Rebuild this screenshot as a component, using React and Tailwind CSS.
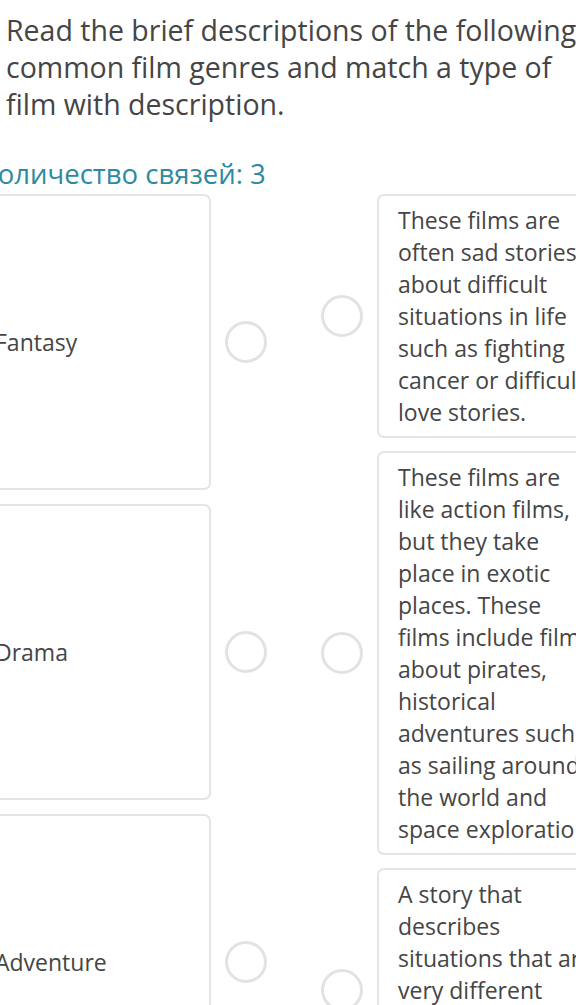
import React from "react";

const font = { fontFamily: '"Open Sans", "Noto Sans", sans-serif' };

const genres = ["Fantasy", "Drama", "Adventure"];

const descriptions = [
  [
    "These films are",
    "often sad stories",
    "about difficult",
    "situations in life",
    "such as fighting",
    "cancer or difficult",
    "love stories.",
  ],
  [
    "These films are",
    "like action films,",
    "but they take",
    "place in exotic",
    "places. These",
    "films include films",
    "about pirates,",
    "historical",
    "adventures such",
    "as sailing around",
    "the world and",
    "space exploration.",
  ],
  [
    "A story that",
    "describes",
    "situations that are",
    "very different",
    "from real life,",
    "often with magic",
    "and strange worlds.",
  ],
];

function Dot() {
  return <div className="h-[42px] w-[42px] shrink-0 rounded-full border-[3px] border-[#dfe3e5] bg-white" />;
}

export default function App() {
  return (
    <div className="h-[1005px] w-[576px] overflow-hidden bg-white text-[#454545]" style={font}>
      <h1 className="pl-[6px] pt-[12px] text-[28.5px] font-normal leading-[37px] whitespace-nowrap">
        Read the brief descriptions of the following
        <br />
        common film genres and match a type of
        <br />
        film with description.
      </h1>

      <p className="ml-[-19px] mt-[35px] text-[27.5px] leading-[32px] text-[#2e8aa0] whitespace-nowrap">
        Количество связей: 3
      </p>

      <div className="ml-[-26px] mt-[4px] flex items-start gap-[54px]">
        <div className="flex flex-col gap-[14px]">
          {genres.map((g) => (
            <div key={g} className="flex items-center gap-[14px]">
              <div className="flex h-[296px] w-[237px] items-center rounded-[7px] border-2 border-[#e4e4e4] px-[19px] text-[23px] leading-[32px]">
                {g}
              </div>
              <Dot />
            </div>
          ))}
        </div>

        <div className="flex flex-col gap-[13px]">
          {descriptions.map((lines, i) => (
            <div key={i} className="flex items-center gap-[14px]">
              <Dot />
              <div className="w-[260px] rounded-[7px] border-2 border-[#e4e4e4] px-[19px] py-2 text-[23px] leading-[32px] whitespace-nowrap">
                {lines.map((l) => (
                  <div key={l}>{l}</div>
                ))}
              </div>
            </div>
          ))}
        </div>
      </div>
    </div>
  );
}
